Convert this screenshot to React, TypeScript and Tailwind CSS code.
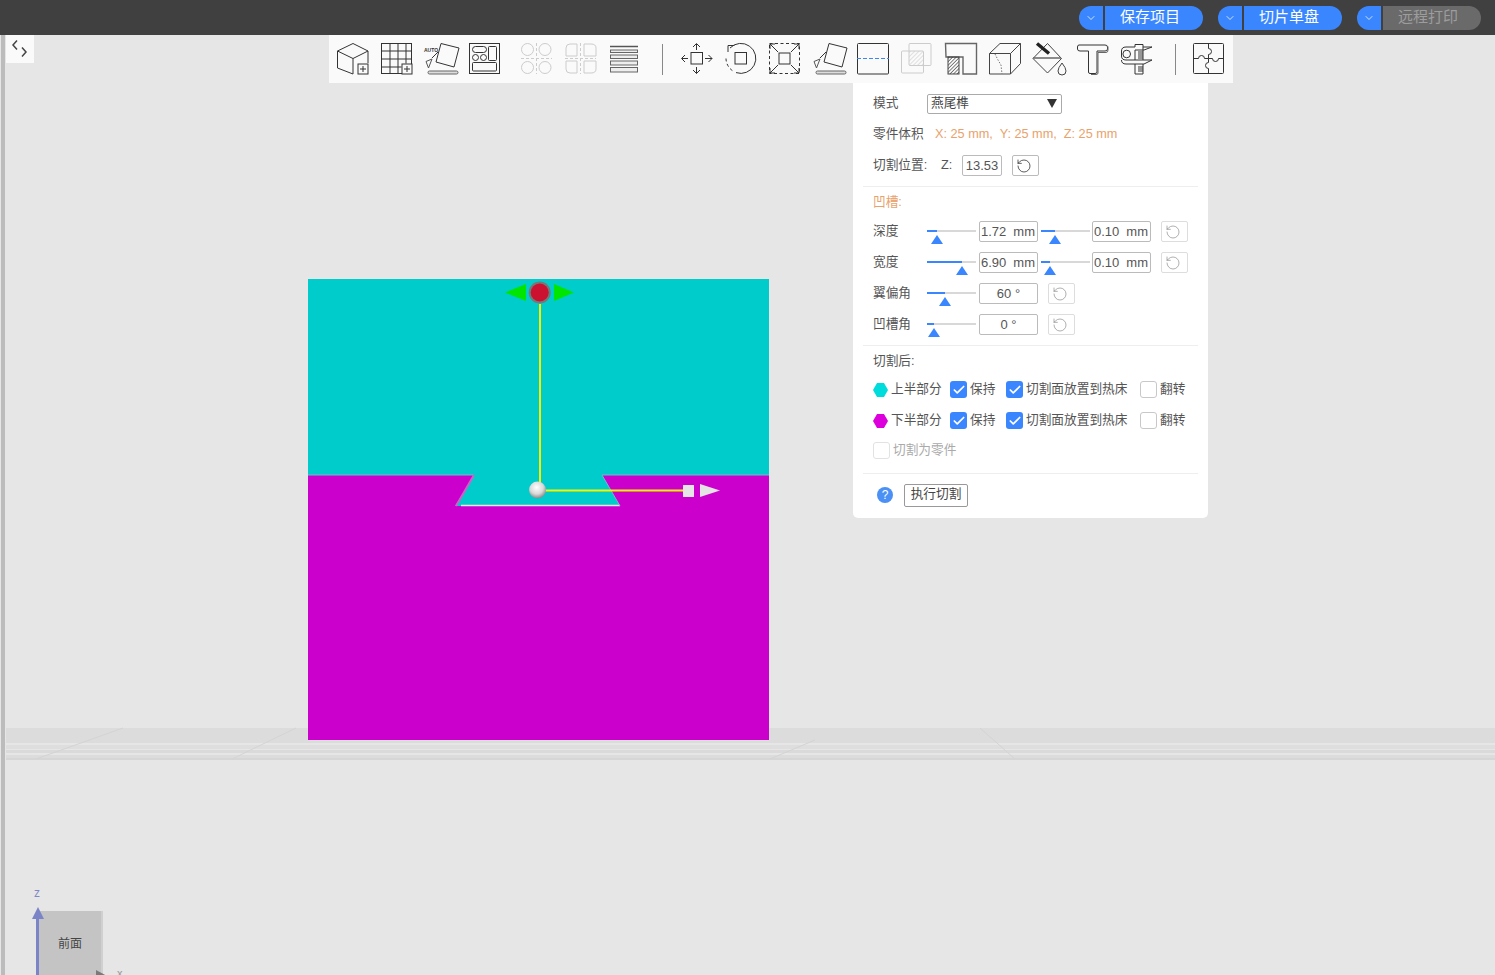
import { ChevronDown, Check, RotateCcw } from 'lucide-react'

const cjk = '[font-family:"Liberation_Sans","Noto_Sans_CJK_SC",sans-serif]'

function Ico({ children, w = 32 }: { children: React.ReactNode; w?: number }) {
  return (
    <svg width={w} height={32} viewBox={`0 0 ${w} 32`} fill="none" stroke="#333" strokeWidth="1" className="shrink-0 overflow-visible">
      {children}
    </svg>
  )
}

const PlusBox = () => (
  <>
    <rect x="21" y="21" width="10" height="10" fill="#fafafa" />
    <path d="M23 26h6M26 23v6" />
  </>
)

// tilted square + arrow + bed, used twice
const PlaceOnBed = () => (
  <>
    <path d="M16 .5 34 5 29 24 11 19Z" />
    <path d="M7 16 1 18.5 3.5 25Z" stroke="#555" />
    <path d="M7 15 13 9" />
    <rect x="3" y="28" width="30" height="3" rx="1.5" stroke="#666" fill="#ddd" />
  </>
)

function Toolbar() {
  return (
    <div className="absolute left-[329px] top-0 flex h-12 w-[904px] items-center bg-[#fafafa] pl-2">
      <div className="flex gap-3">
        <Ico>
          <path d="M.5 8 16 .5 31 8 16 15.5ZM16 15.5V31M.5 8v17L16 31M31 8v12" />
          <PlusBox />
        </Ico>
        <Ico>
          <rect x=".5" y=".5" width="30" height="30" />
          <path d="M9 .5v30M17 .5v30M25 .5v20M.5 8h30M.5 16h30M.5 24h20" />
          <PlusBox />
        </Ico>
        <Ico>
          <PlaceOnBed />
          <text x="-1" y="9" fontSize="5" fill="#333" stroke="none" fontFamily="Liberation Sans" fontWeight="700">AUTO</text>
        </Ico>
        <Ico>
          <rect x=".5" y=".5" width="30" height="30" />
          <rect x="3.5" y="3.5" width="14" height="6" rx="3" />
          <circle cx="6.5" cy="14.5" r="3" />
          <circle cx="14.5" cy="14.5" r="3" />
          <rect x="19.5" y="3.5" width="8" height="14" rx="1" />
          <rect x="3.5" y="19.5" width="24" height="8.5" rx="1" />
        </Ico>
      </div>
      <div className="ml-5 flex gap-3">
        <Ico>
          <g stroke="#ccc">
            <circle cx="6.5" cy="6.5" r="6" />
            <circle cx="24" cy="6.5" r="6" />
            <circle cx="6.5" cy="24.5" r="6" />
            <circle cx="24" cy="24.5" r="6" />
            <path d="M15.5 0v31M0 15.5h31" strokeDasharray="3 2" />
          </g>
        </Ico>
        <Ico>
          <g stroke="#ccc">
            <path d="M12 1H5Q1 1 1 5v8h11ZM19 1h7q5 0 5 4v8H19ZM12 30H5q-4 0-4-4v-8h11ZM19 30h7q5 0 5-4v-8H19Z" />
            <path d="M15.5 0v31M0 15.5h31" strokeDasharray="3 2" />
          </g>
        </Ico>
        <Ico>
          <path d="M1 3.5h28" stroke="#555" strokeWidth="1.5" />
          <g stroke="#666" fill="#eee">
            <rect x="1.500" y="7" width="27" height="2.500" />
            <rect x="1.500" y="12" width="27" height="3.500" />
            <rect x="1.500" y="18" width="27" height="4" />
            <rect x="1.500" y="24.500" width="27" height="4.500" />
          </g>
        </Ico>
      </div>
      <div className="ml-[21px] mr-[18px] h-[31px] w-px bg-[#888]" />
      <div className="flex gap-3">
        <Ico>
          <rect x="10" y="9.5" width="11.5" height="11.5" />
          <path d="M15.5 1v6M15.5 24v6.500M1 15.500h6M24 15.500h7M12 4 15.500 .5 19 4M12 27l3.500 3.500L19 27M4 12 .5 15.500 4 19M27.500 12l3.500 3.500-3.500 3.500" />
        </Ico>
        <Ico>
          <rect x="10" y="9.500" width="11.500" height="11.500" />
          <path d="M5 5A15 15 0 1 1 11 29.600" />
          <path d="M1 15.500A15 15 0 0 0 8 28" strokeDasharray="3 2.500" />
          <path d="M3 9V2.500H9.500" />
        </Ico>
        <Ico>
          <rect x=".5" y=".5" width="30" height="30" strokeDasharray="3 2.500" />
          <rect x="10" y="10" width="11" height="11" />
          <path d="M1 1l8 8M30 1l-8 8M1 30l8-8M30 30l-8-8M1 6V1h5M25 1h5v5M1 25v5h5M30 25v5h-5" />
        </Ico>
        <Ico>
          <PlaceOnBed />
        </Ico>
        <Ico>
          <rect x=".5" y=".5" width="31" height="30.500" rx="1" />
          <path d="M0 15.500h32" stroke="#3b86f5" strokeDasharray="4 2" />
        </Ico>
        <Ico>
          <defs>
            <pattern id="lt" width="3" height="3" patternUnits="userSpaceOnUse" patternTransform="rotate(45)">
              <path d="M0 0v3" stroke="#ccc" strokeWidth="1.200" />
            </pattern>
            <pattern id="dk" width="2.500" height="2.500" patternUnits="userSpaceOnUse" patternTransform="rotate(45)">
              <path d="M0 0v2.500" stroke="#333" strokeWidth="1.200" />
            </pattern>
          </defs>
          <rect x="8" y="8" width="14" height="14" fill="url(#lt)" stroke="none" />
          <g stroke="#ccc">
            <rect x="8" y=".5" width="22" height="22" rx="1" />
            <rect x=".5" y="8" width="22" height="22" rx="1" />
          </g>
        </Ico>
        <Ico>
          <path d="M.5 .5H31.500V31H18V14H1Z" stroke="#666" strokeWidth="1.400" />
          <rect x="3" y="14" width="11" height="17" fill="url(#dk)" stroke="#444" />
        </Ico>
        <Ico>
          <g stroke="#444">
            <path d="M.5 10.500H21.500V31H.5ZM.5 10.500 11 .5H31.500L21.500 10.500M31.500 .5V20.500L21.500 31" />
            <path d="M6 11l3 6 3 5 1 9" strokeDasharray="1.500 1.500" stroke="#777" />
          </g>
        </Ico>
        <Ico>
          <path d="M0 15.500 14.500 .5 28.500 15.500 14.500 30Z" stroke="#444" />
          <path d="M0 15h28" stroke="#666" strokeWidth="1.500" />
          <path d="M4 .5 16 10.500" stroke="#222" strokeWidth="3.500" />
          <path d="M29 20q-4 5-4 8a4 4 0 0 0 8 0q0-3-4-8Z" stroke="#444" />
        </Ico>
        <Ico>
          <path d="M2 2H28Q30.500 2 30.500 4V6Q30.500 8 28 8H20V29Q20 30.500 18 30.500H13Q11.500 30.500 11.500 29V8H3Q.5 8 .5 6V4Q.5 2 2 2Z" />
          <path d="M30 3.500h1V7q0 2.500-2 2.500h-8V30q0 1.500-2 1.500h-5" stroke="#666" />
        </Ico>
        <Ico>
          <path d="M.5 8Q.5 4 5 4H14V1.500H22V4H31L23 7H14V17M22 4V17M.5 8V13Q.5 17 5 17H31L23 21H5Q.5 21 .5 17M14 21V31H22V21" />
          <circle cx="5.700" cy="11" r="3.800" />
          <path d="M17 9h5M17 11h5M17 13h5M17 15h5M17 24h5M17 26h5M17 28h5" />
        </Ico>
      </div>
      <div className="ml-[22px] mr-[17px] h-[31px] w-px bg-[#888]" />
      <Ico>
        <rect x=".5" y=".5" width="30" height="30" rx="1" />
        <path d="M15.500 .5V5.500A3 3 0 1 1 15.500 11.500V15.500H11.500A3 3 0 1 0 5.500 15.500H.5M15.500 15.500H19.500A3 3 0 1 0 25.500 15.500H30.500M15.500 15.500V19.500A3 3 0 1 0 15.500 25.500V30.500" />
      </Ico>
    </div>
  )
}

function TopButton({ label, off }: { label: string; off?: boolean }) {
  return (
    <div className="flex h-6 w-[124px]">
      <div className="flex w-6 items-center justify-center rounded-l-full bg-[#3a86ff] text-white">
        <ChevronDown size={12} strokeWidth={1.500} />
      </div>
      <div
        className={`ml-0.5 flex flex-1 items-center justify-center rounded-r-full pb-[2px] pr-2 text-[15px] leading-none ${
          off ? 'bg-[#6a6a6a] text-[#9d9d9d]' : 'bg-[#3a86ff] text-white'
        }`}
      >
        {label}
      </div>
    </div>
  )
}

function Slider({ at }: { at: number }) {
  return (
    <div className="relative h-5 w-[49px] shrink-0">
      <div className="absolute left-0 right-0 top-[8px] h-0.5 bg-[#d8d8d8]" />
      <div className="absolute left-0 top-[8px] h-0.5 bg-[#3a86ff]" style={{ width: at }} />
      <div
        className="absolute top-[13px] h-0 w-0 border-x-[6px] border-b-[9px] border-x-transparent border-b-[#3a86ff]"
        style={{ left: at - 6 }}
      />
    </div>
  )
}

function Field({ children, w = 59, center }: { children: React.ReactNode; w?: number; center?: boolean }) {
  return (
    <div
      className={`flex h-[21px] shrink-0 items-center rounded-[2px] border border-[#bbb] bg-white text-[13px] text-[#555] ${
        center ? 'justify-center' : 'justify-between pl-[1px] pr-[2px]'
      }`}
      style={{ width: w }}
    >
      {children}
    </div>
  )
}

function Reset() {
  return (
    <div className="flex h-[21px] w-[27px] shrink-0 items-center justify-center rounded-[2px] border border-[#ddd] pr-[4px] text-[#888]">
      <RotateCcw size={16} strokeWidth={1} />
    </div>
  )
}

function Box({ on, dim }: { on?: boolean; dim?: boolean }) {
  if (on) {
    return (
      <div className="flex h-[17px] w-[17px] shrink-0 items-center justify-center rounded-[3px] bg-[#3a86ff] text-white">
        <Check size={14} strokeWidth={3} />
      </div>
    )
  }
  return <div className={`h-[17px] w-[17px] shrink-0 rounded-[3px] border ${dim ? 'border-[#e2e2e2]' : 'border-[#c8c8c8]'}`} />
}

function Hex({ color }: { color: string }) {
  return (
    <svg width="15" height="14" viewBox="0 0 15 14" className="shrink-0">
      <path d="M4 0h7l4 7-4 7H4L0 7Z" fill={color} />
    </svg>
  )
}

function CutRow({ color, label }: { color: string; label: string }) {
  return (
    <div className="flex h-[31px] items-center">
      <Hex color={color} />
      <span className="ml-[3px] w-[59px]">{label}</span>
      <Box on />
      <span className="ml-[3px] w-[36px]">保持</span>
      <Box on />
      <span className="ml-[3px] w-[114px]">切割面放置到热床</span>
      <Box />
      <span className="ml-[3px]">翻转</span>
    </div>
  )
}

function Panel() {
  const sliderRow = 'flex h-[31px] items-center'
  return (
    <div className={`absolute left-[853px] top-[48px] h-[435px] w-[355px] rounded-b-[5px] bg-white px-[10px] pt-[5px] text-[12.700px] text-[#555] ${cjk}`}>
      <div className="px-[10px]">
        <div className="flex h-[31px] items-center">
          <span className="w-[54px]">模式</span>
          <div className="flex h-5 w-[135px] items-center justify-between rounded-[2px] border border-[#aaa] pl-[3px] pr-[4px] text-[#444]">
            燕尾榫
            <div className="h-0 w-0 border-x-[5.500px] border-t-[9px] border-x-transparent border-t-[#333]" />
          </div>
        </div>
        <div className="flex h-[31px] items-center">
          <span className="w-[62px]">零件体积</span>
          <span className="text-[#e9a26b]">X: 25 mm,&nbsp; Y: 25 mm,&nbsp; Z: 25 mm</span>
        </div>
        <div className="flex h-[31px] items-center">
          <span className="w-[68px]">切割位置:</span>
          <span className="w-[21px]">Z:</span>
          <Field w={40} center>13.53</Field>
          <div className="ml-[10px] flex h-[21px] w-[27px] items-center justify-center rounded-[2px] border border-[#bbb] pr-[3px] text-[#333]">
            <RotateCcw size={16} strokeWidth={1.200} />
          </div>
        </div>
      </div>
      <div className="mt-[5px] h-px bg-[#eee]" />
      <div className="px-[10px]">
        <div className="flex h-[29px] items-center pt-[3px] text-[#e9a26b]">凹槽:</div>
        <div className={sliderRow}>
          <span className="w-[54px]">深度</span>
          <Slider at={10} />
          <div className="ml-[3px]"><Field>1.72<span>mm</span></Field></div>
          <div className="ml-[3px]"><Slider at={14} /></div>
          <div className="ml-[2px]"><Field>0.10<span>mm</span></Field></div>
          <div className="ml-[10px]"><Reset /></div>
        </div>
        <div className={sliderRow}>
          <span className="w-[54px]">宽度</span>
          <Slider at={35} />
          <div className="ml-[3px]"><Field>6.90<span>mm</span></Field></div>
          <div className="ml-[3px]"><Slider at={9} /></div>
          <div className="ml-[2px]"><Field>0.10<span>mm</span></Field></div>
          <div className="ml-[10px]"><Reset /></div>
        </div>
        <div className={sliderRow}>
          <span className="w-[54px]">翼偏角</span>
          <Slider at={18} />
          <div className="ml-[3px]"><Field center>60 °</Field></div>
          <div className="ml-[10px]"><Reset /></div>
        </div>
        <div className={sliderRow}>
          <span className="w-[54px]">凹槽角</span>
          <Slider at={7} />
          <div className="ml-[3px]"><Field center>0 °</Field></div>
          <div className="ml-[10px]"><Reset /></div>
        </div>
      </div>
      <div className="mt-[5px] h-px bg-[#eee]" />
      <div className="px-[10px]">
        <div className="flex h-[28px] items-center pt-[4px]">切割后:</div>
        <CutRow color="#00dcdc" label="上半部分" />
        <CutRow color="#dc00dc" label="下半部分" />
        <div className="flex h-[29px] items-center text-[#aaa]">
          <Box dim />
          <span className="ml-[3px]">切割为零件</span>
        </div>
      </div>
      <div className="mt-[8px] h-px bg-[#eee]" />
      <div className="flex h-[42px] items-center pl-[14px]">
        <div className="flex h-4 w-4 items-center justify-center rounded-full bg-[#4a90f5] text-[12px] text-white">?</div>
        <div className="ml-[11px] flex h-[23px] w-[64px] items-center justify-center rounded-[2px] border border-[#999] text-[#444]">执行切割</div>
      </div>
    </div>
  )
}

// 3D viewport: the model, gizmo and bed grid sit at their place on the canvas
function Scene() {
  return (
    <svg className="absolute inset-0" width="1495" height="940" viewBox="0 35 1495 940">
      <g fill="#dcdcdc">
        <rect x="6" y="728" width="1489" height="15" />
        <rect x="6" y="745" width="1489" height="4" fill="#dedede" />
        <rect x="6" y="750" width="1489" height="3" fill="#dadada" />
        <rect x="6" y="755" width="1489" height="3" />
        <rect x="6" y="758" width="1489" height="2" fill="#d6d6d6" />
      </g>
      <path d="M123 728 36 759M296 728 232 759M815 740 770 759M980 728 1015 759" stroke="#d4d4d4" />
      <rect x="308" y="279" width="461" height="196" fill="#00cccc" />
      <rect x="308" y="475" width="461" height="265" fill="#cc00cc" />
      <path d="M474 475 H602 L620 506 H455 Z" fill="#00cccc" />
      <path d="M474 475 456 506" stroke="#d060c8" strokeWidth="2" />
      <path d="M461 505.500H620" stroke="#e6e6e6" strokeWidth="1.500" />
      <path d="M602 475 620 506" stroke="#70b8d0" />
      <path d="M308 475H473M602 475H769" stroke="#70b8d0" />
      <path d="M540 304V490" stroke="#f5f500" strokeWidth="2" />
      <path d="M545 490.500H683" stroke="#f5f500" strokeWidth="2" />
      <path d="M526 284V301L505 292.500ZM554 284V301L574 292.500Z" fill="#00e600" />
      <circle cx="539.700" cy="292.500" r="11" fill="#777" />
      <circle cx="539.700" cy="292.500" r="9" fill="#cc1030" />
      <defs>
        <radialGradient id="ball" cx="45%" cy="35%" r="65%">
          <stop offset="0%" stopColor="#ffffff" />
          <stop offset="60%" stopColor="#d8d8d8" />
          <stop offset="100%" stopColor="#888" />
        </radialGradient>
      </defs>
      <circle cx="537.500" cy="490" r="8.500" fill="url(#ball)" />
      <rect x="683" y="485" width="11" height="12" fill="#e6e6e6" />
      <path d="M700 484 720 490.500 700 497Z" fill="#e4e4e4" />
    </svg>
  )
}

function ViewCube() {
  return (
    <>
      <div className="absolute left-[39px] top-[876px] flex h-[64px] w-[64px] items-center justify-center border-r-2 border-[#d0d0d0] bg-[#c4c4c4] pt-[2px] text-[12px] text-[#444]">
        前面
      </div>
      <span className="absolute left-[34px] top-[849px] text-[12px] text-[#8088c8]">z</span>
      <div className="absolute left-[36px] top-[884px] h-[56px] w-[3px] bg-[#7c84c8]" />
      <div className="absolute left-[32px] top-[872px] h-0 w-0 border-x-[6px] border-b-[12px] border-x-transparent border-b-[#7c84c8]" />
      <div className="absolute left-[96px] top-[935px] h-0 w-0 border-y-[6px] border-l-[11px] border-y-transparent border-l-[#7a7a7a]" />
      <span className="absolute left-[117px] top-[930px] text-[11px] text-[#999]">x</span>
    </>
  )
}

export default function App() {
  return (
    <div className={`flex h-[975px] w-[1495px] flex-col overflow-hidden bg-[#e6e6e6] ${cjk}`}>
      <header className="flex h-[35px] shrink-0 items-center justify-end gap-[15px] bg-[#404040] pr-[14px]">
        <TopButton label="保存项目" />
        <TopButton label="切片单盘" />
        <TopButton label="远程打印" off />
      </header>
      <main className="relative flex-1">
        <Scene />
        <div className="absolute bottom-0 left-0 top-0 w-[5px] border-l border-[#e6e6e6] bg-[#bcbcbc]" />
        <div className="absolute left-[6px] top-0 flex h-7 w-7 items-center justify-center bg-[#fafafa]">
          <svg width="18" height="18" viewBox="0 0 18 18" fill="none" stroke="#444" strokeWidth="1.500">
            <path d="M6 .5 2 5 6 9.500M11 7.500 15 12 11 16.500" />
          </svg>
        </div>
        <Toolbar />
        <Panel />
        <ViewCube />
      </main>
    </div>
  )
}
